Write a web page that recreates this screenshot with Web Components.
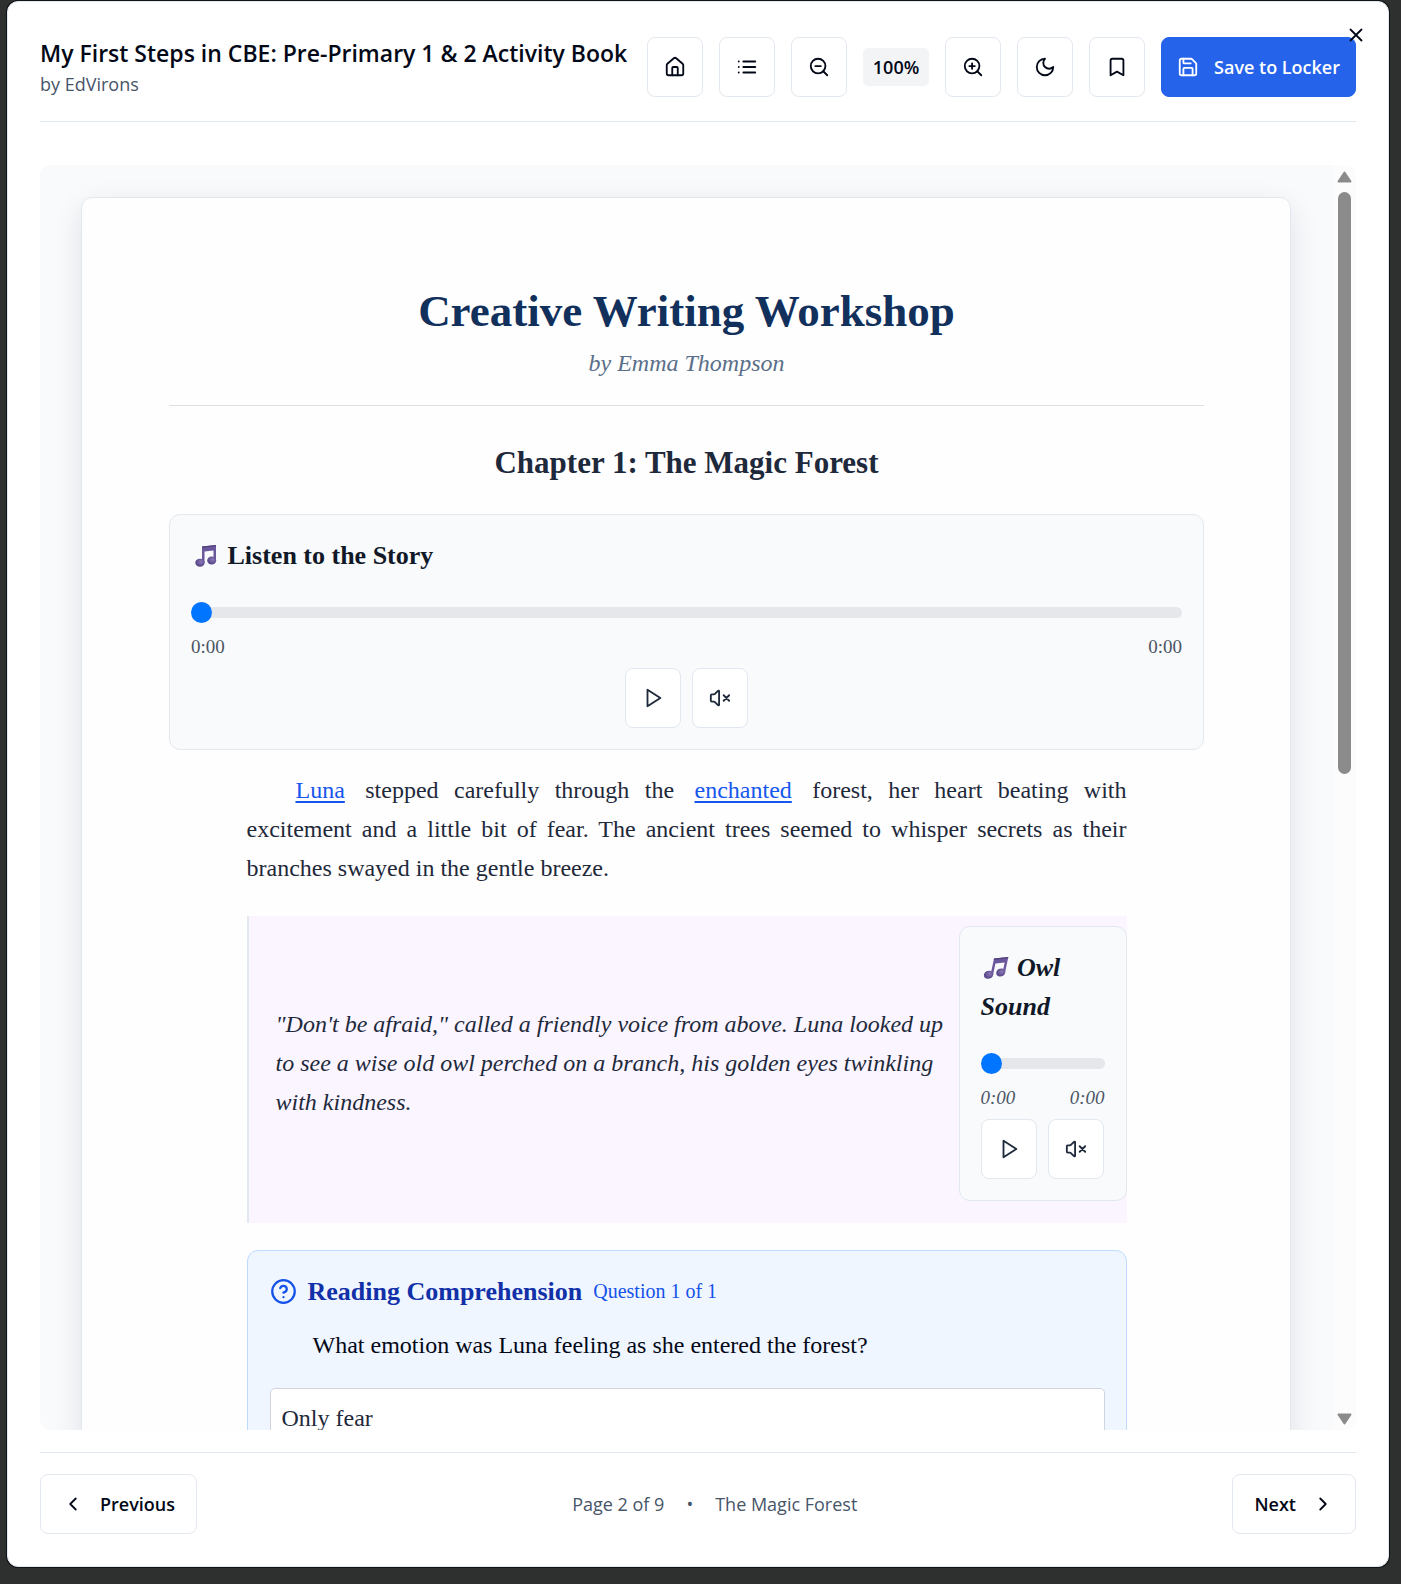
<!DOCTYPE html>
<html lang="en">
<head>
<meta charset="utf-8">
<meta name="viewport" content="width=device-width, initial-scale=1">
<title>My First Steps in CBE</title>
<style>
  html, body { margin: 0; height: 100%; }
  body {
    background: #2e302f;
    font-family: "Open Sans", sans-serif;
    --ui: "Open Sans", sans-serif;
    --book: "Liberation Serif", serif;
    --line: #e2e8f0;
    --ink: #020817;
  }
</style>
</head>
<body>
<reader-dialog>
  <reader-toolbar slot="header" heading="My First Steps in CBE: Pre-Primary 1 &amp; 2 Activity Book" author="by EdVirons"></reader-toolbar>
  <book-page>
    <book-title heading="Creative Writing Workshop" author="by Emma Thompson"></book-title>
    <chapter-heading>Chapter 1: The Magic Forest</chapter-heading>
    <audio-player label="Listen to the Story"></audio-player>
    <book-column>
      <book-paragraph><glossary-link>Luna</glossary-link> stepped carefully through the <glossary-link>enchanted</glossary-link> forest, her heart beating with excitement and a little bit of fear. The ancient trees seemed to whisper secrets as their branches swayed in the gentle breeze.</book-paragraph>
      <book-quote>"Don't be afraid," called a friendly voice from above. Luna looked up to see a wise old owl perched on a branch, his golden eyes twinkling with kindness.<audio-player slot="media" label="Owl Sound" compact></audio-player></book-quote>
      <quiz-card heading="Reading Comprehension" progress="Question 1 of 1">
        What emotion was Luna feeling as she entered the forest?
        <quiz-option slot="options">Only fear</quiz-option>
      </quiz-card>
    </book-column>
  </book-page>
  <reader-footer slot="footer" page="Page 2 of 9" chapter="The Magic Forest"></reader-footer>
</reader-dialog>

<script>
const define = (name, render) => customElements.define(name, class extends HTMLElement {
  constructor() {
    super();
    this.attachShadow({ mode: "open" });
  }
  connectedCallback() {
    this.shadowRoot.innerHTML = "<style>*{box-sizing:border-box}</style>" + render(this);
  }
});

const ICONS = {
  home: '<path d="M15 21v-8a1 1 0 0 0-1-1h-4a1 1 0 0 0-1 1v8"/><path d="M3 10a2 2 0 0 1 .709-1.528l7-5.999a2 2 0 0 1 2.582 0l7 5.999A2 2 0 0 1 21 10v9a2 2 0 0 1-2 2H5a2 2 0 0 1-2-2z"/>',
  list: '<path d="M3 12h.01M3 18h.01M3 6h.01M8 12h13M8 18h13M8 6h13"/>',
  zoomout: '<circle cx="11" cy="11" r="8"/><path d="m21 21-4.35-4.35M8 11h6"/>',
  zoomin: '<circle cx="11" cy="11" r="8"/><path d="m21 21-4.35-4.35M11 8v6M8 11h6"/>',
  moon: '<path d="M12 3a6 6 0 0 0 9 9 9 9 0 1 1-9-9Z"/>',
  bookmark: '<path d="m19 21-7-4-7 4V5a2 2 0 0 1 2-2h10a2 2 0 0 1 2 2v16z"/>',
  save: '<path d="M15.2 3a2 2 0 0 1 1.4.6l3.8 3.8a2 2 0 0 1 .6 1.4V19a2 2 0 0 1-2 2H5a2 2 0 0 1-2-2V5a2 2 0 0 1 2-2z"/><path d="M17 21v-7a1 1 0 0 0-1-1H8a1 1 0 0 0-1 1v7M7 3v4a1 1 0 0 0 1 1h7"/>',
  close: '<path d="M18 6 6 18M6 6l12 12"/>',
  play: '<path d="m6 3 14 9-14 9z"/>',
  mute: '<path d="M11 4.702a.705.705 0 0 0-1.203-.498L6.413 7.587A1.4 1.4 0 0 1 5.416 8H3a1 1 0 0 0-1 1v6a1 1 0 0 0 1 1h2.416a1.4 1.4 0 0 1 .997.413l3.383 3.384A.705.705 0 0 0 11 19.298zM22 9l-6 6M16 9l6 6"/>',
  help: '<circle cx="12" cy="12" r="10"/><path d="M9.09 9a3 3 0 0 1 5.83 1c0 2-3 3-3 3M12 17h.01"/>',
  left: '<path d="m15 18-6-6 6-6"/>',
  right: '<path d="m9 18 6-6-6-6"/>'
};

define("ui-icon", el => `
  <style>
    :host { display: block; flex: none; width: var(--size, 22px); height: var(--size, 22px); }
    svg { display: block; width: 100%; height: 100%; fill: none; stroke: currentColor; stroke-width: 2; stroke-linecap: round; stroke-linejoin: round; }
  </style>
  <svg viewBox="0 0 24 24" aria-hidden="true">${ICONS[el.getAttribute("name")]}</svg>`);

define("music-note", () => `
  <style>
    :host { display: inline-block; width: 22px; height: 22px; margin: 0 4px; vertical-align: -3px; }
    svg { display: block; width: 100%; height: 100%; }
  </style>
  <svg viewBox="0 0 22 22" aria-hidden="true">
    <defs><radialGradient id="g" cx=".6" cy=".4"><stop offset="0" stop-color="#8b78b8"/><stop offset="1" stop-color="#5b4a8b"/></radialGradient></defs>
    <path d="M7 1.500 21 0V16H18.500V5.500L9.500 6.500V18H7Z" fill="#6b589c"/>
    <path d="M7 1.500 21 0V1.300L7 2.900Z" fill="#51417e"/>
    <ellipse cx="5" cy="17.700" rx="4.700" ry="4" fill="url(#g)"/>
    <ellipse cx="16.700" cy="15.500" rx="4.500" ry="4" fill="url(#g)"/>
  </svg>`);

define("tool-button", el => `
  <style>
    :host { display: block; flex: none; }
    button {
      display: flex; align-items: center; justify-content: center; gap: 16px;
      min-width: 56px; height: 60px; padding: 0 16px;
      border: 1px solid var(--line); border-radius: 8px; background: #fff; color: inherit;
      font: 600 18px/28px var(--ui); white-space: nowrap;
    }
    :host([primary]) button { gap: 15px; padding: 0 15px; background: #2563eb; border-color: #2563eb; color: #fff; }
    :host([nav]) button { padding: 0 21px; }
  </style>
  <button type="button" aria-label="${el.getAttribute("label") || el.textContent.trim()}"><slot></slot></button>`);

define("reader-dialog", () => `
  <style>
    :host { display: block; height: 100vh; padding: 1px 12px 17px 7px; box-sizing: border-box; color: var(--ink); }
    section {
      position: relative; display: flex; flex-direction: column; height: 100%;
      padding: 34px 32px 32px; background: #fff; border: 1px solid var(--line); border-radius: 11px;
      box-shadow: 0 0 0 1px #101414;
    }
    .close { position: absolute; top: 22px; right: 21px; padding: 0; border: 0; background: none; color: var(--ink); --size: 22px; }
    .view { flex: 1; min-height: 0; display: flex; margin: 43px 0 22px; border-radius: 11px; overflow: hidden; background: #f9fafc; }
    .content { flex: 1; min-width: 0; overflow: hidden; padding: 32px 42px 0 41px; }
  </style>
  <section role="dialog">
    <slot name="header"></slot>
    <div class="view"><div class="content"><slot></slot></div><scroll-rail></scroll-rail></div>
    <slot name="footer"></slot>
    <button class="close" type="button" aria-label="Close"><ui-icon name="close"></ui-icon></button>
  </section>`);

define("scroll-rail", () => `
  <style>
    :host { display: flex; flex-direction: column; align-items: center; flex: none; width: 23px; padding: 6px 0 5px; background: #fcfcfc; }
    svg { flex: none; display: block; width: 15px; height: 12px; fill: #8b8b8b; stroke: #8b8b8b; stroke-width: 2; stroke-linejoin: round; }
    .track { flex: 1; width: 13px; margin: 9px 0; }
    .thumb { height: 48%; border-radius: 7px; background: #8b8b8b; }
  </style>
  <svg viewBox="0 0 15 12"><path d="M7.500 1.500 13.500 10.500H1.500Z"/></svg>
  <div class="track"><div class="thumb"></div></div>
  <svg viewBox="0 0 15 12"><path d="M7.500 10.500 13.500 1.500H1.500Z"/></svg>`);

define("reader-toolbar", el => `
  <style>
    :host { display: flex; align-items: center; gap: 18px; padding-bottom: 23px; border-bottom: 1px solid var(--line); }
    header { flex: 1; min-width: 0; white-space: nowrap; }
    h2 { margin: 0; font: 600 23px/34px var(--ui); }
    p { margin: 0; font: 400 18px/28px var(--ui); color: #475569; }
    nav { display: flex; align-items: center; gap: 16px; flex: none; }
    output { width: 66px; border-radius: 5px; background: #f3f4f6; text-align: center; font: 600 18px/38px var(--ui); }
  </style>
  <header><h2>${el.getAttribute("heading").replace("&", "&amp;")}</h2><p>${el.getAttribute("author")}</p></header>
  <nav>
    <tool-button label="Home"><ui-icon name="home"></ui-icon></tool-button>
    <tool-button label="Contents"><ui-icon name="list"></ui-icon></tool-button>
    <tool-button label="Zoom out"><ui-icon name="zoomout"></ui-icon></tool-button>
    <output>100%</output>
    <tool-button label="Zoom in"><ui-icon name="zoomin"></ui-icon></tool-button>
    <tool-button label="Dark mode"><ui-icon name="moon"></ui-icon></tool-button>
    <tool-button label="Bookmark"><ui-icon name="bookmark"></ui-icon></tool-button>
    <tool-button primary><ui-icon name="save"></ui-icon>Save to Locker</tool-button>
  </nav>`);

define("reader-footer", el => `
  <style>
    :host { display: flex; align-items: center; justify-content: space-between; padding-top: 21px; border-top: 1px solid var(--line); }
    p { display: flex; gap: 22px; margin: 0; font: 400 18px/28px var(--ui); color: #475569; }
  </style>
  <tool-button nav><ui-icon name="left"></ui-icon>Previous</tool-button>
  <p><span>${el.getAttribute("page")}</span><span>•</span><span>${el.getAttribute("chapter")}</span></p>
  <tool-button nav>Next<ui-icon name="right"></ui-icon></tool-button>`);

define("book-page", () => `
  <style>
    :host {
      display: block; padding: 86px 86px 64px 87px; background: #fefefe;
      border: 1px solid var(--line); border-radius: 11px; box-shadow: 0 10px 30px rgba(15, 23, 42, .1);
      font: 400 24px/39px var(--book); color: #1e293b;
    }
  </style>
  <slot></slot>`);

define("book-title", el => `
  <style>
    :host { display: block; padding-bottom: 22px; border-bottom: 1px solid #dcdfe3; text-align: center; }
    h1 { margin: 0; font: 700 45px/54px var(--book); color: #12305c; }
    p { margin: 6px 0 0; font: italic 400 24px/39px var(--book); color: #5a6f89; }
  </style>
  <h1>${el.getAttribute("heading")}</h1><p>${el.getAttribute("author")}</p>`);

define("chapter-heading", () => `
  <style>
    :host { display: block; padding: 36px 0 30px; }
    h2 { margin: 0; text-align: center; font: 700 31px/42px var(--book); color: #1e293b; }
  </style>
  <h2><slot></slot></h2>`);

define("audio-player", el => `
  <style>
    :host { display: block; padding: 21px; border: 1px solid var(--line); border-radius: 11px; background: #f9fafc; }
    h4 { margin: 0 0 32px; font: inherit; font-weight: 700; font-size: 26px; line-height: 39px; color: #111827; }
    :host([compact]) music-note { transform: skewX(-12deg); }
    input {
      display: block; width: 100%; height: 11px; margin: 0; border-radius: 6px;
      background: #e5e7eb; appearance: none; -webkit-appearance: none;
    }
    input::-webkit-slider-thumb { -webkit-appearance: none; width: 21px; height: 21px; border-radius: 50%; background: #0075ff; }
    .times { display: flex; justify-content: space-between; margin: 14px 0 6px; font-size: 19px; line-height: 30px; color: #4b5563; }
    .controls { display: flex; justify-content: center; gap: 11px; color: #1e293b; }
  </style>
  <h4><music-note></music-note> ${el.getAttribute("label")}</h4>
  <input type="range" min="0" max="100" value="0" aria-label="${el.getAttribute("label")}">
  <div class="times"><span>0:00</span><span>0:00</span></div>
  <div class="controls">
    <tool-button label="Play"><ui-icon name="play"></ui-icon></tool-button>
    <tool-button label="Mute"><ui-icon name="mute"></ui-icon></tool-button>
  </div>`);

define("book-column", () => `
  <style>:host { display: block; max-width: 880px; margin: 21px auto 0; }</style>
  <slot></slot>`);

define("book-paragraph", () => `
  <style>p { margin: 0; text-align: justify; text-indent: 44px; } :host { display: block; }</style>
  <p><slot></slot></p>`);

define("glossary-link", () => `
  <style>:host { display: inline; margin: 0 5px; } a { color: #1556ee; text-decoration: underline; text-underline-offset: 3px; }</style>
  <a href="#"><slot></slot></a>`);

define("book-quote", () => `
  <style>
    :host { display: block; margin: 28px 0 27px; }
    blockquote {
      display: flex; align-items: center; gap: 12px; margin: 0; padding: 10px 0 22px 27px;
      border-left: 2px solid var(--line); background: #faf5ff; font-style: italic;
    }
    p { flex: 1; min-width: 0; margin: 0; }
    ::slotted(audio-player) { flex: none; width: 168px; box-sizing: border-box; }
  </style>
  <blockquote><p><slot></slot></p><slot name="media"></slot></blockquote>`);

define("quiz-card", el => `
  <style>
    :host { display: block; padding: 21px 21px 21px 22px; border: 1px solid #bfdbfe; border-radius: 11px; background: #eff6ff; }
    header { display: flex; align-items: center; gap: 11px; color: #1452e8; --size: 27px; }
    h4 { margin: 0; font-size: 26px; line-height: 39px; color: #1230a8; }
    span { font-size: 20px; }
    p { margin: 15px 0 23px; text-indent: 43px; color: #020817; }
  </style>
  <header><ui-icon name="help"></ui-icon><h4>${el.getAttribute("heading")}</h4><span>${el.getAttribute("progress")}</span></header>
  <p><slot></slot></p>
  <slot name="options"></slot>`);

define("quiz-option", () => `
  <style>
    :host { display: block; }
    button {
      display: block; width: 100%; padding: 10px 11px; border: 1px solid #d1d5db; border-radius: 5px;
      background: #fff; color: #1e293b; text-align: left; font: inherit;
    }
  </style>
  <button type="button"><slot></slot></button>`);
</script>
</body>
</html>
